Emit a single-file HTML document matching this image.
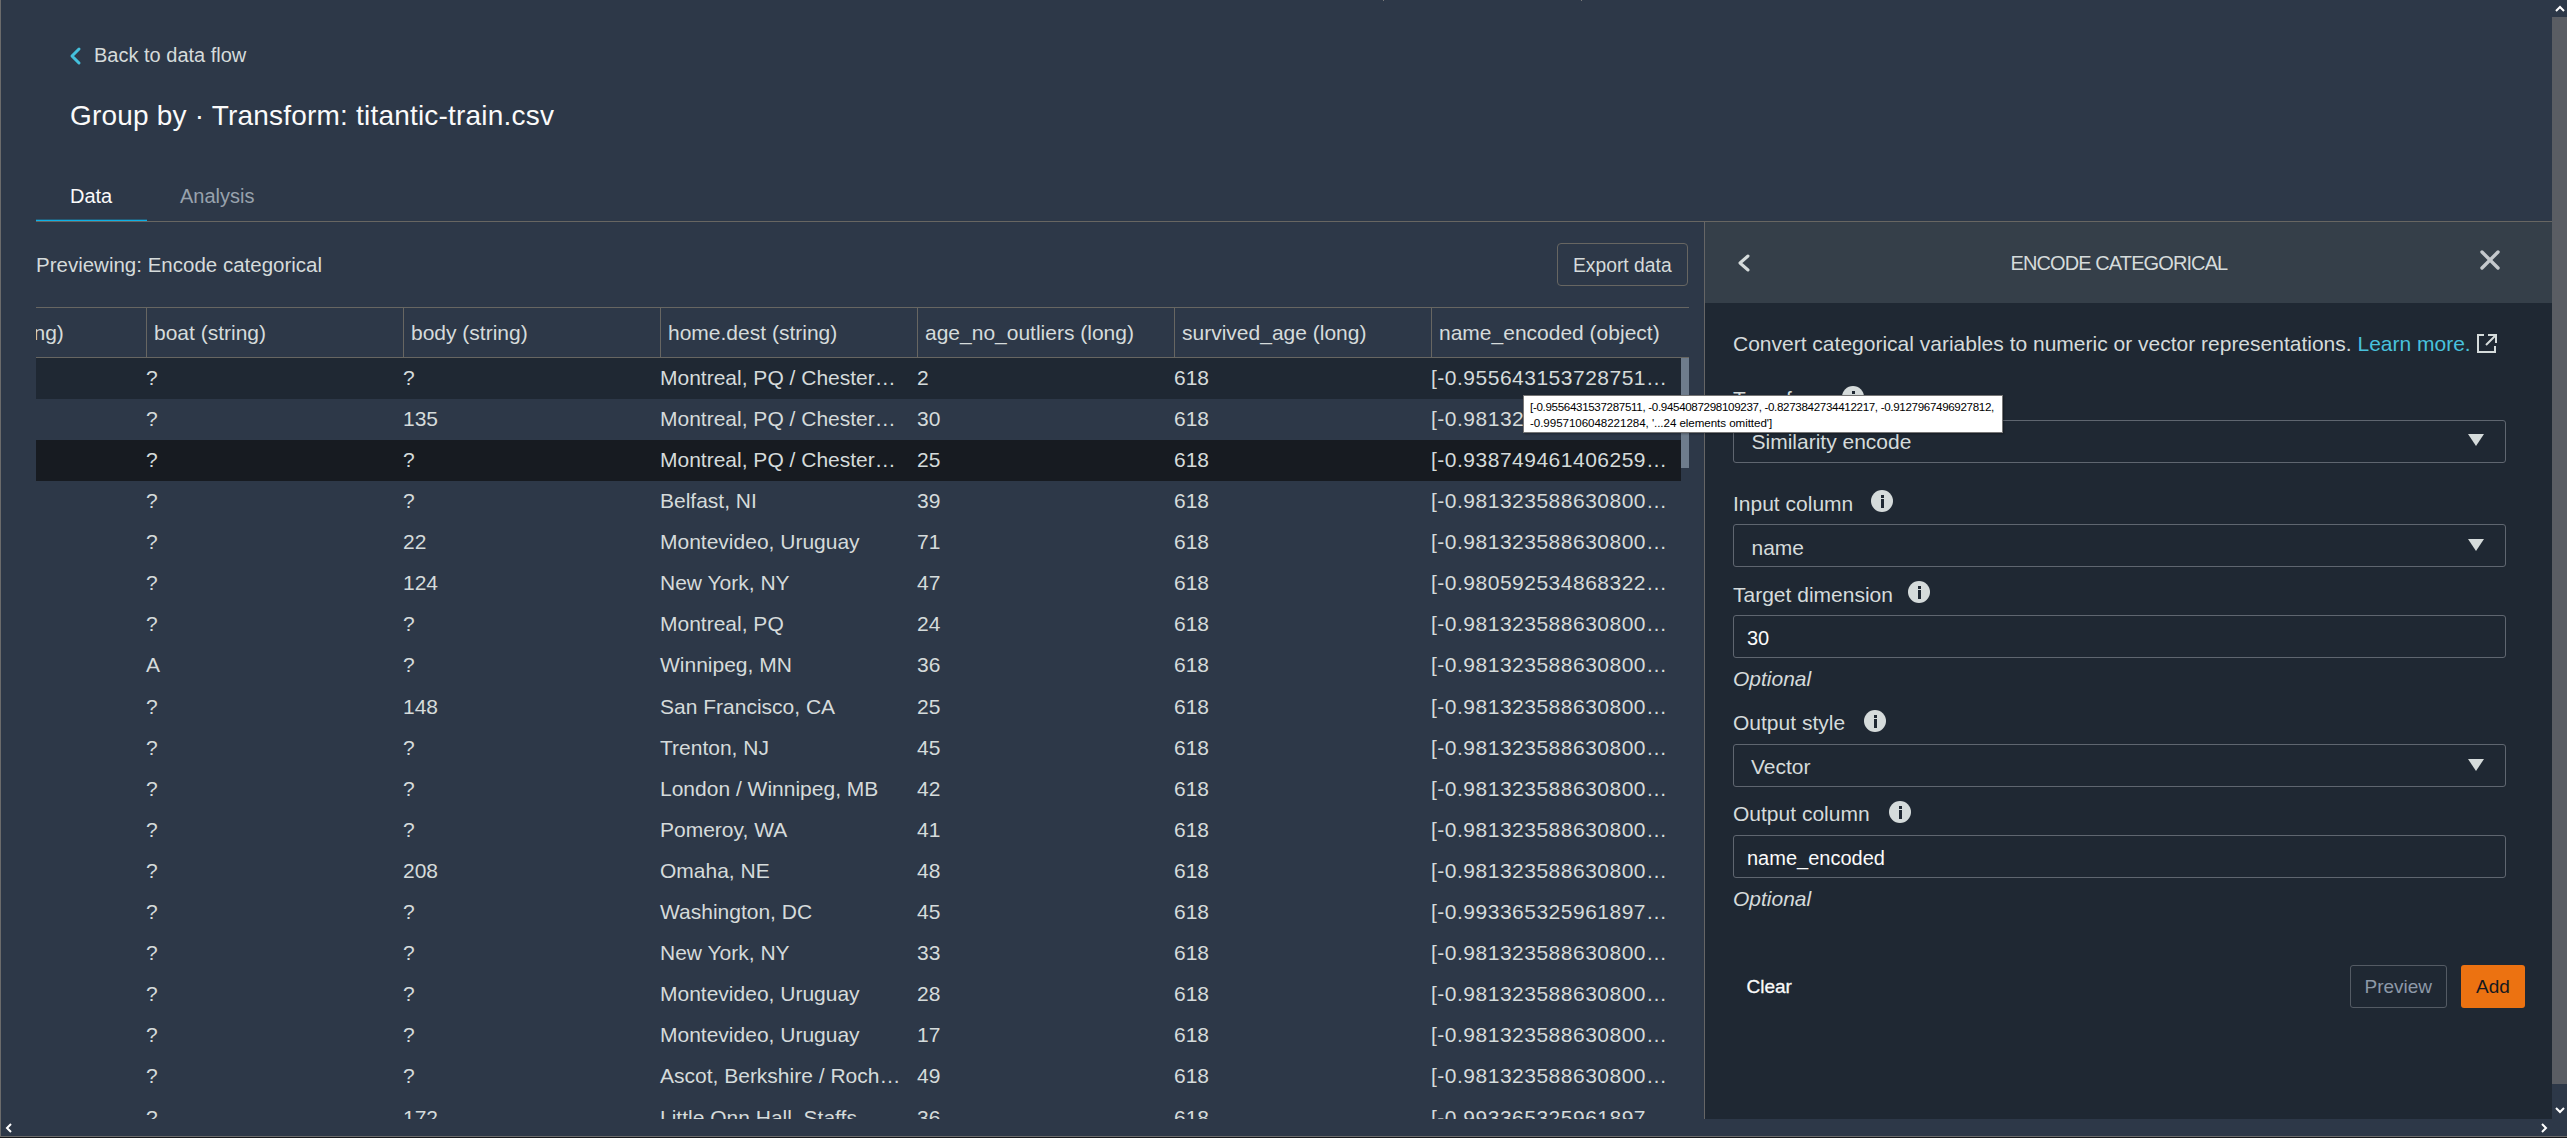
<!DOCTYPE html>
<html><head><meta charset="utf-8"><style>
html,body{margin:0;padding:0;width:2567px;height:1138px;overflow:hidden;background:#2d3848;}
body{position:relative;font-family:"Liberation Sans",sans-serif;}
.t{position:absolute;white-space:nowrap;line-height:1;}
.b{position:absolute;box-sizing:content-box;}
svg{display:block}
</style></head><body>
<div class="t" style="left:94px;top:45.07px;font-size:20px;color:#d5dbdb;">Back to data flow</div><svg style="position:absolute;left:68px;top:45px" width="16" height="22" viewBox="0 0 16 22"><path d="M11 4 L4 11 L11 18" fill="none" stroke="#44c0dc" stroke-width="3" stroke-linecap="round" stroke-linejoin="round"/></svg><div class="t" style="left:70px;top:101.70px;font-size:28px;color:#fafafa;letter-spacing:0.2px">Group by · Transform: titantic-train.csv</div><div class="t" style="left:70px;top:186.07px;font-size:20px;color:#fafafa;">Data</div><div class="t" style="left:180px;top:186.07px;font-size:20px;color:#98a2ad;">Analysis</div><div class="b" style="left:36px;top:221px;width:2516px;height:1px;background:#676662"></div><div class="b" style="left:36px;top:220px;width:111px;height:1px;background:#0db0e6"></div><div class="b" style="left:36px;top:219px;width:111px;height:1px;background:rgba(13,176,230,0.3)"></div><div class="t" style="left:36px;top:254.65px;font-size:20.5px;color:#d5dbdb;">Previewing: Encode categorical</div><div class="b" style="left:1557px;top:243px;width:129px;height:41px;border:1px solid #676662;border-radius:4px"></div><div class="t" style="left:1573px;top:255.66px;font-size:19.3px;color:#d5dbdb;">Export data</div><div class="b" style="left:36px;top:307px;width:1653px;height:1px;background:#676662"></div><div class="b" style="left:36px;top:357px;width:1653px;height:1px;background:#676662"></div><div class="b" style="left:146px;top:308px;width:1px;height:49px;background:#676662"></div><div class="b" style="left:403px;top:308px;width:1px;height:49px;background:#676662"></div><div class="b" style="left:660px;top:308px;width:1px;height:49px;background:#676662"></div><div class="b" style="left:917px;top:308px;width:1px;height:49px;background:#676662"></div><div class="b" style="left:1174px;top:308px;width:1px;height:49px;background:#676662"></div><div class="b" style="left:1431px;top:308px;width:1px;height:49px;background:#676662"></div><div class="b" style="left:36px;top:308px;width:110px;height:49px;overflow:hidden"><div class="t" style="left:-2.5px;top:13.92px;font-size:21px;color:#d5dbdb;">ng)</div></div><div class="t" style="left:154px;top:321.92px;font-size:21px;color:#d5dbdb;">boat (string)</div><div class="t" style="left:411px;top:321.92px;font-size:21px;color:#d5dbdb;">body (string)</div><div class="t" style="left:668px;top:321.92px;font-size:21px;color:#d5dbdb;">home.dest (string)</div><div class="t" style="left:925px;top:321.92px;font-size:21px;color:#d5dbdb;">age_no_outliers (long)</div><div class="t" style="left:1182px;top:321.92px;font-size:21px;color:#d5dbdb;">survived_age (long)</div><div class="t" style="left:1439px;top:321.92px;font-size:21px;color:#d5dbdb;">name_encoded (object)</div><div class="b" style="left:36px;top:358px;width:1645px;height:761px;overflow:hidden"><div class="b" style="left:0px;top:0.00px;width:1645px;height:41.11px;background:#1f2833"></div><div class="t" style="left:110px;top:8.62px;font-size:21px;color:#d5dbdb;">?</div><div class="t" style="left:367px;top:8.62px;font-size:21px;color:#d5dbdb;">?</div><div class="t" style="left:624px;top:8.62px;font-size:21px;color:#d5dbdb;">Montreal, PQ / Chester…</div><div class="t" style="left:881px;top:8.62px;font-size:21px;color:#d5dbdb;">2</div><div class="t" style="left:1138px;top:8.62px;font-size:21px;color:#d5dbdb;">618</div><div class="t" style="left:1395px;top:8.62px;font-size:21px;color:#d5dbdb;letter-spacing:0.5px">[-0.955643153728751…</div><div class="t" style="left:110px;top:49.73px;font-size:21px;color:#d5dbdb;">?</div><div class="t" style="left:367px;top:49.73px;font-size:21px;color:#d5dbdb;">135</div><div class="t" style="left:624px;top:49.73px;font-size:21px;color:#d5dbdb;">Montreal, PQ / Chester…</div><div class="t" style="left:881px;top:49.73px;font-size:21px;color:#d5dbdb;">30</div><div class="t" style="left:1138px;top:49.73px;font-size:21px;color:#d5dbdb;">618</div><div class="t" style="left:1395px;top:49.73px;font-size:21px;color:#d5dbdb;letter-spacing:0.5px">[-0.981323588630800…</div><div class="b" style="left:0px;top:82.22px;width:1645px;height:41.11px;background:#171b21"></div><div class="t" style="left:110px;top:90.84px;font-size:21px;color:#d5dbdb;">?</div><div class="t" style="left:367px;top:90.84px;font-size:21px;color:#d5dbdb;">?</div><div class="t" style="left:624px;top:90.84px;font-size:21px;color:#d5dbdb;">Montreal, PQ / Chester…</div><div class="t" style="left:881px;top:90.84px;font-size:21px;color:#d5dbdb;">25</div><div class="t" style="left:1138px;top:90.84px;font-size:21px;color:#d5dbdb;">618</div><div class="t" style="left:1395px;top:90.84px;font-size:21px;color:#d5dbdb;letter-spacing:0.5px">[-0.938749461406259…</div><div class="t" style="left:110px;top:131.95px;font-size:21px;color:#d5dbdb;">?</div><div class="t" style="left:367px;top:131.95px;font-size:21px;color:#d5dbdb;">?</div><div class="t" style="left:624px;top:131.95px;font-size:21px;color:#d5dbdb;">Belfast, NI</div><div class="t" style="left:881px;top:131.95px;font-size:21px;color:#d5dbdb;">39</div><div class="t" style="left:1138px;top:131.95px;font-size:21px;color:#d5dbdb;">618</div><div class="t" style="left:1395px;top:131.95px;font-size:21px;color:#d5dbdb;letter-spacing:0.5px">[-0.981323588630800…</div><div class="t" style="left:110px;top:173.06px;font-size:21px;color:#d5dbdb;">?</div><div class="t" style="left:367px;top:173.06px;font-size:21px;color:#d5dbdb;">22</div><div class="t" style="left:624px;top:173.06px;font-size:21px;color:#d5dbdb;">Montevideo, Uruguay</div><div class="t" style="left:881px;top:173.06px;font-size:21px;color:#d5dbdb;">71</div><div class="t" style="left:1138px;top:173.06px;font-size:21px;color:#d5dbdb;">618</div><div class="t" style="left:1395px;top:173.06px;font-size:21px;color:#d5dbdb;letter-spacing:0.5px">[-0.981323588630800…</div><div class="t" style="left:110px;top:214.17px;font-size:21px;color:#d5dbdb;">?</div><div class="t" style="left:367px;top:214.17px;font-size:21px;color:#d5dbdb;">124</div><div class="t" style="left:624px;top:214.17px;font-size:21px;color:#d5dbdb;">New York, NY</div><div class="t" style="left:881px;top:214.17px;font-size:21px;color:#d5dbdb;">47</div><div class="t" style="left:1138px;top:214.17px;font-size:21px;color:#d5dbdb;">618</div><div class="t" style="left:1395px;top:214.17px;font-size:21px;color:#d5dbdb;letter-spacing:0.5px">[-0.980592534868322…</div><div class="t" style="left:110px;top:255.28px;font-size:21px;color:#d5dbdb;">?</div><div class="t" style="left:367px;top:255.28px;font-size:21px;color:#d5dbdb;">?</div><div class="t" style="left:624px;top:255.28px;font-size:21px;color:#d5dbdb;">Montreal, PQ</div><div class="t" style="left:881px;top:255.28px;font-size:21px;color:#d5dbdb;">24</div><div class="t" style="left:1138px;top:255.28px;font-size:21px;color:#d5dbdb;">618</div><div class="t" style="left:1395px;top:255.28px;font-size:21px;color:#d5dbdb;letter-spacing:0.5px">[-0.981323588630800…</div><div class="t" style="left:110px;top:296.39px;font-size:21px;color:#d5dbdb;">A</div><div class="t" style="left:367px;top:296.39px;font-size:21px;color:#d5dbdb;">?</div><div class="t" style="left:624px;top:296.39px;font-size:21px;color:#d5dbdb;">Winnipeg, MN</div><div class="t" style="left:881px;top:296.39px;font-size:21px;color:#d5dbdb;">36</div><div class="t" style="left:1138px;top:296.39px;font-size:21px;color:#d5dbdb;">618</div><div class="t" style="left:1395px;top:296.39px;font-size:21px;color:#d5dbdb;letter-spacing:0.5px">[-0.981323588630800…</div><div class="t" style="left:110px;top:337.50px;font-size:21px;color:#d5dbdb;">?</div><div class="t" style="left:367px;top:337.50px;font-size:21px;color:#d5dbdb;">148</div><div class="t" style="left:624px;top:337.50px;font-size:21px;color:#d5dbdb;">San Francisco, CA</div><div class="t" style="left:881px;top:337.50px;font-size:21px;color:#d5dbdb;">25</div><div class="t" style="left:1138px;top:337.50px;font-size:21px;color:#d5dbdb;">618</div><div class="t" style="left:1395px;top:337.50px;font-size:21px;color:#d5dbdb;letter-spacing:0.5px">[-0.981323588630800…</div><div class="t" style="left:110px;top:378.61px;font-size:21px;color:#d5dbdb;">?</div><div class="t" style="left:367px;top:378.61px;font-size:21px;color:#d5dbdb;">?</div><div class="t" style="left:624px;top:378.61px;font-size:21px;color:#d5dbdb;">Trenton, NJ</div><div class="t" style="left:881px;top:378.61px;font-size:21px;color:#d5dbdb;">45</div><div class="t" style="left:1138px;top:378.61px;font-size:21px;color:#d5dbdb;">618</div><div class="t" style="left:1395px;top:378.61px;font-size:21px;color:#d5dbdb;letter-spacing:0.5px">[-0.981323588630800…</div><div class="t" style="left:110px;top:419.72px;font-size:21px;color:#d5dbdb;">?</div><div class="t" style="left:367px;top:419.72px;font-size:21px;color:#d5dbdb;">?</div><div class="t" style="left:624px;top:419.72px;font-size:21px;color:#d5dbdb;">London / Winnipeg, MB</div><div class="t" style="left:881px;top:419.72px;font-size:21px;color:#d5dbdb;">42</div><div class="t" style="left:1138px;top:419.72px;font-size:21px;color:#d5dbdb;">618</div><div class="t" style="left:1395px;top:419.72px;font-size:21px;color:#d5dbdb;letter-spacing:0.5px">[-0.981323588630800…</div><div class="t" style="left:110px;top:460.83px;font-size:21px;color:#d5dbdb;">?</div><div class="t" style="left:367px;top:460.83px;font-size:21px;color:#d5dbdb;">?</div><div class="t" style="left:624px;top:460.83px;font-size:21px;color:#d5dbdb;">Pomeroy, WA</div><div class="t" style="left:881px;top:460.83px;font-size:21px;color:#d5dbdb;">41</div><div class="t" style="left:1138px;top:460.83px;font-size:21px;color:#d5dbdb;">618</div><div class="t" style="left:1395px;top:460.83px;font-size:21px;color:#d5dbdb;letter-spacing:0.5px">[-0.981323588630800…</div><div class="t" style="left:110px;top:501.94px;font-size:21px;color:#d5dbdb;">?</div><div class="t" style="left:367px;top:501.94px;font-size:21px;color:#d5dbdb;">208</div><div class="t" style="left:624px;top:501.94px;font-size:21px;color:#d5dbdb;">Omaha, NE</div><div class="t" style="left:881px;top:501.94px;font-size:21px;color:#d5dbdb;">48</div><div class="t" style="left:1138px;top:501.94px;font-size:21px;color:#d5dbdb;">618</div><div class="t" style="left:1395px;top:501.94px;font-size:21px;color:#d5dbdb;letter-spacing:0.5px">[-0.981323588630800…</div><div class="t" style="left:110px;top:543.05px;font-size:21px;color:#d5dbdb;">?</div><div class="t" style="left:367px;top:543.05px;font-size:21px;color:#d5dbdb;">?</div><div class="t" style="left:624px;top:543.05px;font-size:21px;color:#d5dbdb;">Washington, DC</div><div class="t" style="left:881px;top:543.05px;font-size:21px;color:#d5dbdb;">45</div><div class="t" style="left:1138px;top:543.05px;font-size:21px;color:#d5dbdb;">618</div><div class="t" style="left:1395px;top:543.05px;font-size:21px;color:#d5dbdb;letter-spacing:0.5px">[-0.993365325961897…</div><div class="t" style="left:110px;top:584.16px;font-size:21px;color:#d5dbdb;">?</div><div class="t" style="left:367px;top:584.16px;font-size:21px;color:#d5dbdb;">?</div><div class="t" style="left:624px;top:584.16px;font-size:21px;color:#d5dbdb;">New York, NY</div><div class="t" style="left:881px;top:584.16px;font-size:21px;color:#d5dbdb;">33</div><div class="t" style="left:1138px;top:584.16px;font-size:21px;color:#d5dbdb;">618</div><div class="t" style="left:1395px;top:584.16px;font-size:21px;color:#d5dbdb;letter-spacing:0.5px">[-0.981323588630800…</div><div class="t" style="left:110px;top:625.27px;font-size:21px;color:#d5dbdb;">?</div><div class="t" style="left:367px;top:625.27px;font-size:21px;color:#d5dbdb;">?</div><div class="t" style="left:624px;top:625.27px;font-size:21px;color:#d5dbdb;">Montevideo, Uruguay</div><div class="t" style="left:881px;top:625.27px;font-size:21px;color:#d5dbdb;">28</div><div class="t" style="left:1138px;top:625.27px;font-size:21px;color:#d5dbdb;">618</div><div class="t" style="left:1395px;top:625.27px;font-size:21px;color:#d5dbdb;letter-spacing:0.5px">[-0.981323588630800…</div><div class="t" style="left:110px;top:666.38px;font-size:21px;color:#d5dbdb;">?</div><div class="t" style="left:367px;top:666.38px;font-size:21px;color:#d5dbdb;">?</div><div class="t" style="left:624px;top:666.38px;font-size:21px;color:#d5dbdb;">Montevideo, Uruguay</div><div class="t" style="left:881px;top:666.38px;font-size:21px;color:#d5dbdb;">17</div><div class="t" style="left:1138px;top:666.38px;font-size:21px;color:#d5dbdb;">618</div><div class="t" style="left:1395px;top:666.38px;font-size:21px;color:#d5dbdb;letter-spacing:0.5px">[-0.981323588630800…</div><div class="t" style="left:110px;top:707.49px;font-size:21px;color:#d5dbdb;">?</div><div class="t" style="left:367px;top:707.49px;font-size:21px;color:#d5dbdb;">?</div><div class="t" style="left:624px;top:707.49px;font-size:21px;color:#d5dbdb;">Ascot, Berkshire / Roch…</div><div class="t" style="left:881px;top:707.49px;font-size:21px;color:#d5dbdb;">49</div><div class="t" style="left:1138px;top:707.49px;font-size:21px;color:#d5dbdb;">618</div><div class="t" style="left:1395px;top:707.49px;font-size:21px;color:#d5dbdb;letter-spacing:0.5px">[-0.981323588630800…</div><div class="t" style="left:110px;top:748.60px;font-size:21px;color:#d5dbdb;">?</div><div class="t" style="left:367px;top:748.60px;font-size:21px;color:#d5dbdb;">172</div><div class="t" style="left:624px;top:748.60px;font-size:21px;color:#d5dbdb;">Little Onn Hall, Staffs</div><div class="t" style="left:881px;top:748.60px;font-size:21px;color:#d5dbdb;">36</div><div class="t" style="left:1138px;top:748.60px;font-size:21px;color:#d5dbdb;">618</div><div class="t" style="left:1395px;top:748.60px;font-size:21px;color:#d5dbdb;letter-spacing:0.5px">[-0.993365325961897…</div></div><div class="b" style="left:1681px;top:358px;width:8px;height:110px;background:#6e7c8c"></div><div class="b" style="left:1704px;top:222px;width:1px;height:897px;background:#666666"></div><div class="b" style="left:1705px;top:222px;width:847px;height:81px;background:#353f49"></div><div class="b" style="left:1705px;top:303px;width:847px;height:816px;background:#1f2833"></div><svg style="position:absolute;left:1734px;top:251px" width="20" height="24" viewBox="0 0 20 24"><path d="M14 5 L6 12 L14 19" fill="none" stroke="#d5dbdb" stroke-width="3" stroke-linecap="round" stroke-linejoin="round"/></svg><div class="t" style="left:2010.5px;top:253.07px;font-size:20px;color:#d5dbdb;letter-spacing:-0.9px">ENCODE CATEGORICAL</div><svg style="position:absolute;left:2474px;top:244px" width="32" height="32" viewBox="0 0 32 32"><path d="M8 8 L24 24 M24 8 L8 24" fill="none" stroke="#c4c8cc" stroke-width="3.4" stroke-linecap="round"/></svg><div class="t" style="left:1733px;top:333.22px;font-size:21px;color:#d5dbdb;">Convert categorical variables to numeric or vector representations. <span style="color:#48c1dd">Learn more.</span></div><svg style="position:absolute;left:2475px;top:332px" width="24" height="22" viewBox="0 0 24 22"><path d="M9 3 H3 V20 H20 V14 M13 3 H21 V11 M21 3 L11 13" fill="none" stroke="#d5dbdb" stroke-width="2"/></svg><div class="t" style="left:1733px;top:387.72px;font-size:21px;color:#d5dbdb;">Transform</div><div class="b" style="left:1842px;top:386px;width:22px;height:22px;border-radius:50%;background:#d5dbdb"></div><div class="b" style="left:1851.5px;top:391px;width:3px;height:3px;background:#1f2833"></div><div class="b" style="left:1851.5px;top:395px;width:3px;height:9px;background:#1f2833"></div><div class="b" style="left:1733px;top:420px;width:771px;height:41px;border:1px solid #5f6670;border-radius:3px"></div><div class="t" style="left:1751.5px;top:431.22px;font-size:21px;color:#d5dbdb;">Similarity encode</div><svg style="position:absolute;left:2467px;top:433px" width="18" height="14" viewBox="0 0 18 14"><path d="M1 1 H17 L9 13 Z" fill="#d5dbdb"/></svg><div class="t" style="left:1733px;top:492.62px;font-size:21px;color:#d5dbdb;">Input column</div><div class="b" style="left:1871px;top:490px;width:22px;height:22px;border-radius:50%;background:#d5dbdb"></div><div class="b" style="left:1880.5px;top:495px;width:3px;height:3px;background:#1f2833"></div><div class="b" style="left:1880.5px;top:499px;width:3px;height:9px;background:#1f2833"></div><div class="b" style="left:1733px;top:524px;width:771px;height:41px;border:1px solid #5f6670;border-radius:3px"></div><div class="t" style="left:1751.5px;top:537.22px;font-size:21px;color:#d5dbdb;">name</div><svg style="position:absolute;left:2467px;top:538px" width="18" height="14" viewBox="0 0 18 14"><path d="M1 1 H17 L9 13 Z" fill="#d5dbdb"/></svg><div class="t" style="left:1733px;top:583.72px;font-size:21px;color:#d5dbdb;">Target dimension</div><div class="b" style="left:1908px;top:581px;width:22px;height:22px;border-radius:50%;background:#d5dbdb"></div><div class="b" style="left:1917.5px;top:586px;width:3px;height:3px;background:#1f2833"></div><div class="b" style="left:1917.5px;top:590px;width:3px;height:9px;background:#1f2833"></div><div class="b" style="left:1733px;top:615px;width:771px;height:41px;border:1px solid #5f6670;border-radius:3px"></div><div class="t" style="left:1747px;top:628.07px;font-size:20px;color:#fafafa;">30</div><div class="t" style="left:1733px;top:668.22px;font-size:21px;color:#d5dbdb;font-style:italic">Optional</div><div class="t" style="left:1733px;top:712.22px;font-size:21px;color:#d5dbdb;">Output style</div><div class="b" style="left:1864px;top:710px;width:22px;height:22px;border-radius:50%;background:#d5dbdb"></div><div class="b" style="left:1873.5px;top:715px;width:3px;height:3px;background:#1f2833"></div><div class="b" style="left:1873.5px;top:719px;width:3px;height:9px;background:#1f2833"></div><div class="b" style="left:1733px;top:744px;width:771px;height:41px;border:1px solid #5f6670;border-radius:3px"></div><div class="t" style="left:1751px;top:756.22px;font-size:21px;color:#d5dbdb;">Vector</div><svg style="position:absolute;left:2467px;top:758px" width="18" height="14" viewBox="0 0 18 14"><path d="M1 1 H17 L9 13 Z" fill="#d5dbdb"/></svg><div class="t" style="left:1733px;top:803.42px;font-size:21px;color:#d5dbdb;">Output column</div><div class="b" style="left:1889px;top:801px;width:22px;height:22px;border-radius:50%;background:#d5dbdb"></div><div class="b" style="left:1898.5px;top:806px;width:3px;height:3px;background:#1f2833"></div><div class="b" style="left:1898.5px;top:810px;width:3px;height:9px;background:#1f2833"></div><div class="b" style="left:1733px;top:835px;width:771px;height:41px;border:1px solid #5f6670;border-radius:3px"></div><div class="t" style="left:1747px;top:848.07px;font-size:20px;color:#fafafa;">name_encoded</div><div class="t" style="left:1733px;top:887.82px;font-size:21px;color:#d5dbdb;font-style:italic">Optional</div><div class="t" style="left:1746.5px;top:977.22px;font-size:19px;color:#fafafa;-webkit-text-stroke:0.3px #fafafa">Clear</div><div class="b" style="left:2350px;top:965px;width:95px;height:41px;border:1px solid #545b64;border-radius:3px"></div><div class="t" style="left:2364.5px;top:977.22px;font-size:19px;color:#8d99a8;">Preview</div><div class="b" style="left:2461px;top:965px;width:64px;height:43px;background:#ec7211;border-radius:3px"></div><div class="t" style="left:2476px;top:977.22px;font-size:19px;color:#16191f;">Add</div><div class="b" style="left:1523px;top:395px;width:478px;height:36px;background:#fff;border:1px solid #767676;box-shadow:1px 1px 2px rgba(0,0,0,0.3)"></div><div class="t" style="left:1530px;top:401.18px;font-size:11.6px;color:#000;letter-spacing:-0.33px">[-0.9556431537287511, -0.9454087298109237, -0.8273842734412217, -0.9127967496927812,</div><div class="t" style="left:1530px;top:416.68px;font-size:11.6px;color:#000;letter-spacing:-0.06px">-0.9957106048221284, '...24 elements omitted']</div><div class="b" style="left:2552px;top:17px;width:15px;height:1067px;background:#5a5d63"></div><svg style="position:absolute;left:2553px;top:2px" width="14" height="12" viewBox="0 0 14 12"><path d="M3 9 L7 5 L11 9" fill="none" stroke="#fff" stroke-width="2"/></svg><svg style="position:absolute;left:2553px;top:1104px" width="14" height="12" viewBox="0 0 14 12"><path d="M3 4 L7 8 L11 4" fill="none" stroke="#fff" stroke-width="2"/></svg><svg style="position:absolute;left:2538px;top:1121px" width="12" height="14" viewBox="0 0 12 14"><path d="M4 3 L8 7 L4 11" fill="none" stroke="#fff" stroke-width="2"/></svg><svg style="position:absolute;left:3px;top:1121px" width="12" height="14" viewBox="0 0 12 14"><path d="M8 3 L4 7 L8 11" fill="none" stroke="#fff" stroke-width="2"/></svg><div class="b" style="left:1383px;top:0;width:1px;height:1px;background:#7a7a7a"></div><div class="b" style="left:1581px;top:0;width:1px;height:1px;background:#7a7a7a"></div><div class="b" style="left:0;top:0;width:1px;height:1136px;background:#6b6b6b"></div><div class="b" style="left:0;top:1136px;width:2567px;height:1px;background:#6b6b6b"></div><div class="b" style="left:0;top:1137px;width:2567px;height:1px;background:#16181c"></div>
</body></html>
